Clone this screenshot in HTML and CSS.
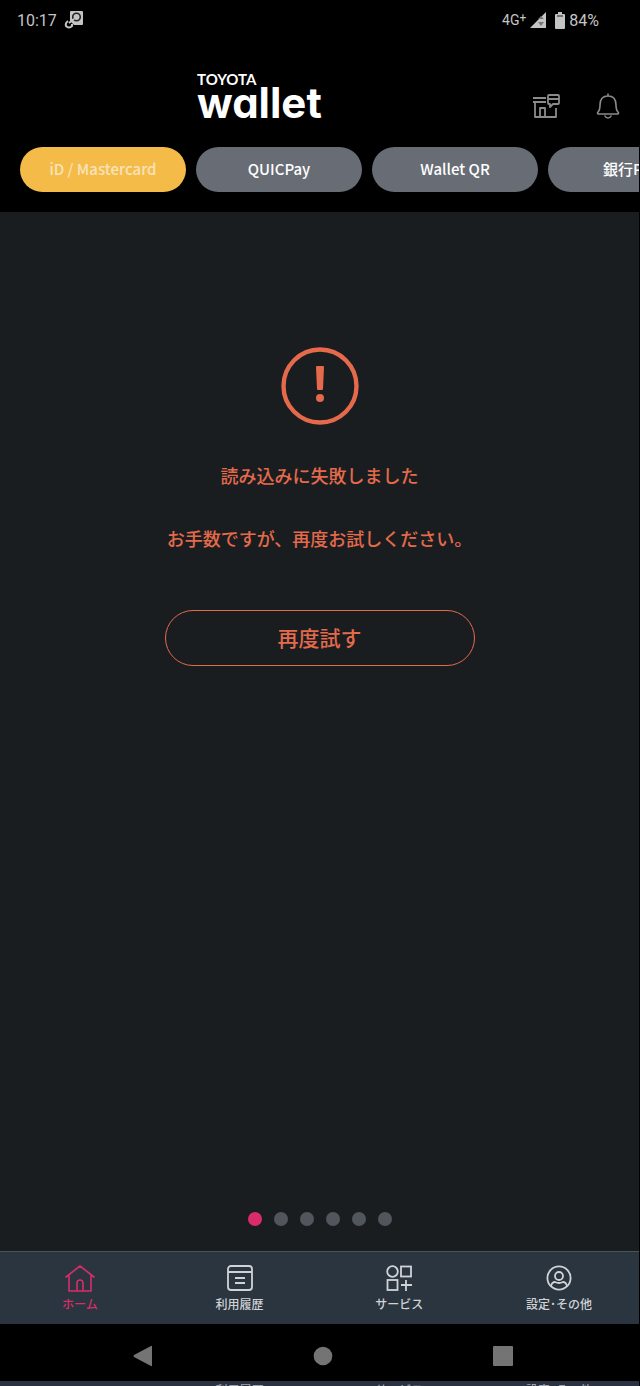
FILE: index.html
```html
<!DOCTYPE html>
<html lang="ja">
<head>
    <meta charset="UTF-8">
    <meta name="viewport" content="width=device-width, initial-scale=1.0">
    <title>TOYOTA Wallet</title>
    <link rel="stylesheet" href="styles.css">
</head>
<body>

<div class="container">
    <div class="status-bar">
        <div class="status-group">
            <span class="clock">10:17</span>
            <svg class="felica-icon" viewBox="0 0 20 20" width="20" height="20">
                <path d="M6 2Q6 1 7 1H18Q19 1 19 2V14Q19 15 18 15H10L6 11Z" fill="#c4c4c4"/>
                <circle cx="12.500" cy="7" r="3.800" fill="#c4c4c4" stroke="#222" stroke-width="1.600"/>
                <path d="M4 11Q1 13 2 16Q5 19 8 16L8 14M5 13L10 9" fill="none" stroke="#c4c4c4" stroke-width="2"/>
            </svg>
        </div>
        <div class="status-group status-right">
            <span class="network">4G<sup>+</sup></span>
            <svg viewBox="0 0 16 16" width="16" height="16">
                <path d="M0 16L16 0V16Z" fill="#c4c4c4"/>
                <path d="M11 4L14 7H8ZM11 14L8 10H14Z" fill="#777"/>
            </svg>
            <svg class="battery-icon" viewBox="0 0 10 17" width="10" height="17">
                <path d="M3 0H7V2H9Q10 2 10 3V16Q10 17 9 17H1Q0 17 0 16V3Q0 2 1 2H3Z" fill="#c4c4c4"/>
                <path d="M2 4H8" stroke="#222" stroke-width="1"/>
            </svg>
            <span class="battery">84%</span>
        </div>
    </div>

    <header class="header">
        <h1 class="logo">
            <span class="logo-small">TOYOTA</span>
            <span class="logo-big">wallet</span>
        </h1>
        <div class="header-actions">
            <button class="icon-button" aria-label="お店">
                <svg viewBox="0 0 28 26" width="28" height="26" fill="none" stroke="#8b8b8b" stroke-width="1.8" stroke-linejoin="round">
                    <path d="M1 5H14M1 9H14M3 9V24H24V15M8 24V15H13V24"/>
                    <path d="M17 2H26Q27 2 27 3V10Q27 11 26 11H21L18 14V11H17Q16 11 16 10V3Q16 2 17 2ZM16 6H27"/>
                </svg>
            </button>
            <button class="icon-button" aria-label="お知らせ">
                <svg viewBox="0 0 24 26" width="24" height="26" fill="none" stroke="#8b8b8b" stroke-width="1.6" stroke-linecap="round" stroke-linejoin="round">
                    <path d="M12 1V3M2 21Q1 20 2 19Q4 17 4 12C4 6 7 3 12 3S20 6 20 12Q20 17 22 19Q23 20 22 21Z"/>
                    <path d="M9 23Q10 25 12 25T15 23"/>
                </svg>
            </button>
        </div>
    </header>

    <div class="tabs">
        <button class="tab active">iD / Mastercard</button>
        <button class="tab">QUICPay</button>
        <button class="tab">Wallet QR</button>
        <button class="tab">銀行Pay</button>
    </div>

    <main class="content">
        <svg class="error-icon" viewBox="0 0 78 78" width="78" height="78">
            <circle cx="39" cy="39" r="36.500" fill="none" stroke="#e56a4b" stroke-width="4.400"/>
            <path d="M36 19H42Q43 19 43 20L42 42Q42 43 41 43H37Q36 43 36 42L35 20Q35 19 36 19Z" fill="#e56a4b"/>
            <circle cx="39" cy="51" r="4" fill="#e56a4b"/>
        </svg>
        <p class="error-title">読み込みに失敗しました</p>
        <p class="error-text">お手数ですが、再度お試しください。</p>
        <button class="retry-button">再度試す</button>
        <div class="dots">
            <span class="dot active"></span>
            <span class="dot"></span>
            <span class="dot"></span>
            <span class="dot"></span>
            <span class="dot"></span>
            <span class="dot"></span>
        </div>
    </main>

    <nav class="bottom-nav">
        <a class="nav-item active" href="#">
            <svg viewBox="0 0 30 28" width="30" height="28" fill="none" stroke="currentColor" stroke-width="1.6" stroke-linejoin="round" stroke-linecap="round">
                <path d="M1 13L15 2L29 13M4 11V27H26V11M12 27V19Q12 16 15 16T18 19V27"/>
            </svg>
            ホーム
        </a>
        <a class="nav-item" href="#">
            <svg viewBox="0 0 30 28" width="30" height="28" fill="none" stroke="currentColor" stroke-width="1.8">
                <rect x="3" y="2" width="24" height="24" rx="3"/>
                <path d="M3 8H27M10 14H20M10 19H20"/>
            </svg>
            利用履歴
        </a>
        <a class="nav-item" href="#">
            <svg viewBox="0 0 30 28" width="30" height="28" fill="none" stroke="currentColor" stroke-width="1.8">
                <circle cx="8.500" cy="7.500" r="5.300"/>
                <rect x="17" y="2.500" width="10" height="10"/>
                <rect x="3.500" y="16" width="10" height="10"/>
                <path d="M22 16V27M17 21H28"/>
            </svg>
            サービス
        </a>
        <a class="nav-item" href="#">
            <svg viewBox="0 0 30 28" width="30" height="28" fill="none" stroke="currentColor" stroke-width="1.8">
                <circle cx="15" cy="14" r="11.600"/>
                <circle cx="15" cy="12" r="4"/>
                <path d="M7 22Q8 18 11 18Q15 20 19 18Q22 18 23 22"/>
            </svg>
            設定･その他
        </a>
    </nav>

    <div class="system-nav">
        <button class="system-button" aria-label="戻る">
            <svg viewBox="0 0 20 22" width="20" height="22"><path d="M1 10L18 1Q19 0 19 2V20Q19 22 18 21L1 12Q0 11 1 10Z" fill="#747474"/></svg>
        </button>
        <button class="system-button" aria-label="ホーム">
            <svg viewBox="0 0 20 20" width="20" height="20"><circle cx="10" cy="10" r="9.300" fill="#747474"/></svg>
        </button>
        <button class="system-button" aria-label="最近のアプリ">
            <svg viewBox="0 0 20 20" width="20" height="20"><rect width="20" height="20" rx="1" fill="#747474"/></svg>
        </button>
    </div>

    <!-- top edge of the next nav bar -->
    <div class="nav-peek" aria-hidden="true">
        <span class="peek-label"></span>
        <span class="peek-label">利用履歴</span>
        <span class="peek-label">サービス</span>
        <span class="peek-label">設定･その他</span>
    </div>
</div>

</body>
</html>
```
FILE: styles.css
```css
:root {
    --orange: #e56a4b;
    --pink: #da2c68;
    --grey: #686d75;
    --light: #c4c4c4;
}

* {
    box-sizing: border-box;
}

html, body {
    margin: 0;
    padding: 0;
    background-color: #000;
    font-family: "Noto Sans CJK JP", sans-serif;
}

button {
    font-family: inherit;
    padding: 0;
    border: none;
    background: none;
    cursor: pointer;
}

svg {
    display: block;
    flex-shrink: 0;
}

.container {
    display: flex;
    flex-direction: column;
    min-height: 100vh;
    margin-right: 1px;
    overflow: hidden;
}

.status-bar {
    display: flex;
    justify-content: space-between;
    height: 40px;
    padding: 0 40px 0 17px;
    color: var(--light);
    font-family: Roboto, sans-serif;
    font-size: 16px;
}

.status-group {
    display: flex;
    align-items: center;
    gap: 7px;
}

.network {
    font-size: 14px;
}

.network sup {
    font-size: 12px;
    line-height: 1;
    vertical-align: 3px;
}

.status-right {
    gap: 4px;
}

.battery-icon {
    margin-left: 5px;
}

.header {
    display: flex;
    justify-content: space-between;
    height: 107px;
    padding: 32px 19px 0 197px;
}

.logo {
    display: flex;
    flex-direction: column;
    margin: 0;
    color: #fff;
    font-family: Inter, sans-serif;
}

.logo-small {
    font-family: Lato, sans-serif;
    font-size: 15px;
    line-height: 15px;
    font-weight: 700;
}

.logo-big {
    font-size: 42px;
    line-height: 32px;
    font-weight: 700;
    font-feature-settings: "cv11";
}

.header-actions {
    display: flex;
    align-items: flex-start;
    gap: 36px;
    padding-top: 21px;
}

.tabs {
    display: flex;
    gap: 10px;
    height: 65px;
    padding-left: 20px;
    overflow: hidden;
}

.tab {
    flex: 0 0 166px;
    height: 45px;
    padding-bottom: 2px;
    border-radius: 23px;
    background-color: var(--grey);
    color: #fff;
    font-size: 15px;
    font-weight: 500;
}

.tab.active {
    background-color: #f4bb49;
    color: #f8e3b8;
}

.content {
    flex: 1;
    display: flex;
    flex-direction: column;
    align-items: center;
    padding: 135px 20px 25px;
    background-color: #191d20;
    color: var(--orange);
}

.error-title,
.error-text {
    margin: 38px 0 0;
    font-size: 18px;
    line-height: 24px;
    font-weight: 500;
}

.error-text {
    margin-top: 39px;
}

.retry-button {
    width: 310px;
    max-width: 100%;
    height: 56px;
    margin-top: 60px;
    padding-bottom: 2px;
    border: 1px solid var(--orange);
    border-radius: 28px;
    color: var(--orange);
    font-size: 21px;
    font-weight: 500;
}

.dots {
    display: flex;
    gap: 12px;
    margin-top: auto;
}

.dot {
    width: 14px;
    height: 14px;
    border-radius: 50%;
    background-color: #50565b;
}

.dot.active {
    background-color: var(--pink);
}

.bottom-nav {
    display: grid;
    grid-template-columns: repeat(4, 1fr);
    height: 73px;
    border-top: 1px solid #4b535b;
    background-color: #2a3540;
}

.nav-item {
    display: flex;
    flex-direction: column;
    align-items: center;
    gap: 2px;
    padding-top: 12px;
    color: #d0d3d6;
    font-size: 12px;
    line-height: 20px;
    font-weight: 500;
    text-decoration: none;
}

.nav-item.active {
    color: var(--pink);
}

.system-nav {
    display: flex;
    justify-content: space-between;
    align-items: center;
    height: 57px;
    padding: 6px 126px 0 133px;
}

.nav-peek {
    display: grid;
    grid-template-columns: repeat(4, 1fr);
    height: 5px;
    padding-top: 3px;
    overflow: hidden;
    background-color: #2a3140;
}

.peek-label {
    color: #a0a5ac;
    font-size: 12px;
    line-height: 12px;
    font-weight: 500;
    text-align: center;
}
```
